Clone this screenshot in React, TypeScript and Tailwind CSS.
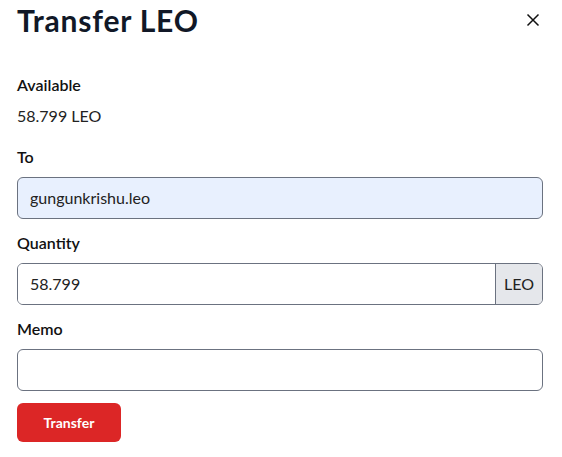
import React from "react";

export default function App() {
  return (
    <div
      className="w-[562px] h-[457px] bg-white text-[#111827] pl-[17px] pr-[19px] pt-[2px]"
      style={{ fontFamily: "Lato, 'Noto Sans', sans-serif" }}
    >
      <div className="flex items-center justify-between h-[36px]">
        <h1 className="text-[30px] leading-[36px] font-bold tracking-[0.8px]">Transfer LEO</h1>
        <button className="w-[24px] h-[24px] -mr-[2px] flex items-center justify-center text-[#111]" aria-label="Close">
          <svg width="14" height="14" viewBox="0 0 14 14" fill="none">
            <path d="M1.5 1.5 L12.5 12.5 M12.5 1.5 L1.5 12.5" stroke="currentColor" strokeWidth="1.5" />
          </svg>
        </button>
      </div>

      <div className="mt-[35px] text-[16px] leading-[24px] font-semibold text-[#111]">Available</div>
      <div className="mt-[7px] text-[16px] leading-[24px] text-[#222]">58.799 LEO</div>

      <div className="mt-[17px] text-[16px] leading-[24px] font-semibold text-[#111]">To</div>
      <div className="mt-[8px] h-[42px] rounded-[6px] border border-[#6b7280] bg-[#e8f0fe] flex items-center px-[12px] text-[16px] text-[#222]">
        gungunkrishu.leo
      </div>

      <div className="mt-[12px] text-[16px] leading-[24px] font-semibold text-[#111]">Quantity</div>
      <div className="mt-[8px] h-[42px] rounded-[6px] border border-[#6b7280] flex overflow-hidden">
        <div className="flex-1 flex items-center px-[12px] text-[16px] text-[#222] bg-white">58.799</div>
        <div className="w-[47px] border-l border-[#6b7280] bg-[#e5e7eb] flex items-center justify-center text-[16px] text-[#222]">
          LEO
        </div>
      </div>

      <div className="mt-[12px] text-[16px] leading-[24px] font-semibold text-[#111]">Memo</div>
      <div className="mt-[8px] h-[42px] rounded-[6px] border border-[#6b7280] bg-white"></div>

      <button className="mt-[12px] w-[104px] h-[39px] rounded-[6px] bg-[#dc2626] text-white text-[14px] font-bold flex items-center justify-center">
        Transfer
      </button>
    </div>
  );
}
